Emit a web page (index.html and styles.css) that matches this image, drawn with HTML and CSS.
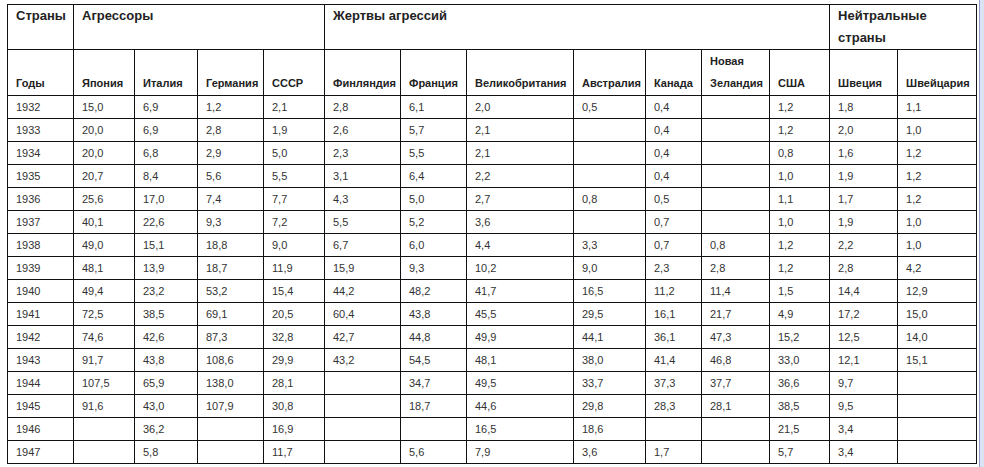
FILE: index.html
```html
<!DOCTYPE html>
<html lang="ru">
<head>
<meta charset="utf-8">
<title>Таблица</title>
<link rel="stylesheet" href="styles.css">
</head>
<body>
<div class="page">
<table class="data">
<colgroup>
<col class="w66"><col class="w61"><col class="w63"><col class="w66"><col class="w61">
<col class="w76"><col class="w66"><col class="w107"><col class="w72"><col class="w56"><col class="w68">
<col class="w60"><col class="w68"><col class="w79">
</colgroup>
<thead>
<tr class="group">
<th>Страны</th>
<th colspan="4">Агрессоры</th>
<th colspan="7">Жертвы агрессий</th>
<th colspan="2">Нейтральные страны</th>
</tr>
<tr class="names">
<th>Годы</th><th>Япония</th><th>Италия</th><th>Германия</th><th>СССР</th>
<th>Финляндия</th><th>Франция</th><th>Великобритания</th><th>Австралия</th><th>Канада</th><th>Новая Зеландия</th><th>США</th>
<th>Швеция</th><th>Швейцария</th>
</tr>
</thead>
<tbody>
<tr><td>1932</td><td>15,0</td><td>6,9</td><td>1,2</td><td>2,1</td><td>2,8</td><td>6,1</td><td>2,0</td><td>0,5</td><td>0,4</td><td></td><td>1,2</td><td>1,8</td><td>1,1</td></tr>
<tr><td>1933</td><td>20,0</td><td>6,9</td><td>2,8</td><td>1,9</td><td>2,6</td><td>5,7</td><td>2,1</td><td></td><td>0,4</td><td></td><td>1,2</td><td>2,0</td><td>1,0</td></tr>
<tr><td>1934</td><td>20,0</td><td>6,8</td><td>2,9</td><td>5,0</td><td>2,3</td><td>5,5</td><td>2,1</td><td></td><td>0,4</td><td></td><td>0,8</td><td>1,6</td><td>1,2</td></tr>
<tr><td>1935</td><td>20,7</td><td>8,4</td><td>5,6</td><td>5,5</td><td>3,1</td><td>6,4</td><td>2,2</td><td></td><td>0,4</td><td></td><td>1,0</td><td>1,9</td><td>1,2</td></tr>
<tr><td>1936</td><td>25,6</td><td>17,0</td><td>7,4</td><td>7,7</td><td>4,3</td><td>5,0</td><td>2,7</td><td>0,8</td><td>0,5</td><td></td><td>1,1</td><td>1,7</td><td>1,2</td></tr>
<tr><td>1937</td><td>40,1</td><td>22,6</td><td>9,3</td><td>7,2</td><td>5,5</td><td>5,2</td><td>3,6</td><td></td><td>0,7</td><td></td><td>1,0</td><td>1,9</td><td>1,0</td></tr>
<tr><td>1938</td><td>49,0</td><td>15,1</td><td>18,8</td><td>9,0</td><td>6,7</td><td>6,0</td><td>4,4</td><td>3,3</td><td>0,7</td><td>0,8</td><td>1,2</td><td>2,2</td><td>1,0</td></tr>
<tr><td>1939</td><td>48,1</td><td>13,9</td><td>18,7</td><td>11,9</td><td>15,9</td><td>9,3</td><td>10,2</td><td>9,0</td><td>2,3</td><td>2,8</td><td>1,2</td><td>2,8</td><td>4,2</td></tr>
<tr><td>1940</td><td>49,4</td><td>23,2</td><td>53,2</td><td>15,4</td><td>44,2</td><td>48,2</td><td>41,7</td><td>16,5</td><td>11,2</td><td>11,4</td><td>1,5</td><td>14,4</td><td>12,9</td></tr>
<tr><td>1941</td><td>72,5</td><td>38,5</td><td>69,1</td><td>20,5</td><td>60,4</td><td>43,8</td><td>45,5</td><td>29,5</td><td>16,1</td><td>21,7</td><td>4,9</td><td>17,2</td><td>15,0</td></tr>
<tr><td>1942</td><td>74,6</td><td>42,6</td><td>87,3</td><td>32,8</td><td>42,7</td><td>44,8</td><td>49,9</td><td>44,1</td><td>36,1</td><td>47,3</td><td>15,2</td><td>12,5</td><td>14,0</td></tr>
<tr><td>1943</td><td>91,7</td><td>43,8</td><td>108,6</td><td>29,9</td><td>43,2</td><td>54,5</td><td>48,1</td><td>38,0</td><td>41,4</td><td>46,8</td><td>33,0</td><td>12,1</td><td>15,1</td></tr>
<tr><td>1944</td><td>107,5</td><td>65,9</td><td>138,0</td><td>28,1</td><td></td><td>34,7</td><td>49,5</td><td>33,7</td><td>37,3</td><td>37,7</td><td>36,6</td><td>9,7</td><td></td></tr>
<tr><td>1945</td><td>91,6</td><td>43,0</td><td>107,9</td><td>30,8</td><td></td><td>18,7</td><td>44,6</td><td>29,8</td><td>28,3</td><td>28,1</td><td>38,5</td><td>9,5</td><td></td></tr>
<tr><td>1946</td><td></td><td>36,2</td><td></td><td>16,9</td><td></td><td></td><td>16,5</td><td>18,6</td><td></td><td></td><td>21,5</td><td>3,4</td><td></td></tr>
<tr><td>1947</td><td></td><td>5,8</td><td></td><td>11,7</td><td></td><td>5,6</td><td>7,9</td><td>3,6</td><td>1,7</td><td></td><td>5,7</td><td>3,4</td><td></td></tr>
</tbody>
</table>
<div class="edge"></div>
</div>
</body>
</html>
```

FILE: styles.css
```css
html, body {
  margin: 0;
  padding: 0;
  background: #fff;
}
.page {
  display: flex;
  height: 467px;
  overflow: hidden;
  font-family: "Liberation Sans", Arial, sans-serif;
  color: #333;
}
.data {
  border-collapse: collapse;
  table-layout: fixed;
  width: 969px;
  margin: 4px 0 0 7px;
  align-self: flex-start;
}
.w56 { width: 56px; }
.w60 { width: 60px; }
.w61 { width: 61px; }
.w63 { width: 63px; }
.w66 { width: 66px; }
.w68 { width: 68px; }
.w72 { width: 72px; }
.w76 { width: 76px; }
.w79 { width: 79px; }
.w107 { width: 107px; }
.data th,
.data td {
  border: 1px solid #111;
  text-align: left;
  padding: 0 0 0 8px;
}
.data th {
  color: #222;
  font-weight: bold;
}
.group th {
  height: 44px;
  vertical-align: top;
  font-size: 13px;
  line-height: 22px;
  padding-top: 0;
}
.names th {
  height: 44px;
  vertical-align: bottom;
  font-size: 11px;
  line-height: 22px;
  padding-bottom: 1px;
}
.data td {
  height: 22px;
  font-size: 11px;
  line-height: 14px;
  vertical-align: middle;
}
.edge {
  margin-left: auto;
  width: 4px;
  border-left: 1px solid #8f9cca;
  background: #dbe2f3;
}
```
